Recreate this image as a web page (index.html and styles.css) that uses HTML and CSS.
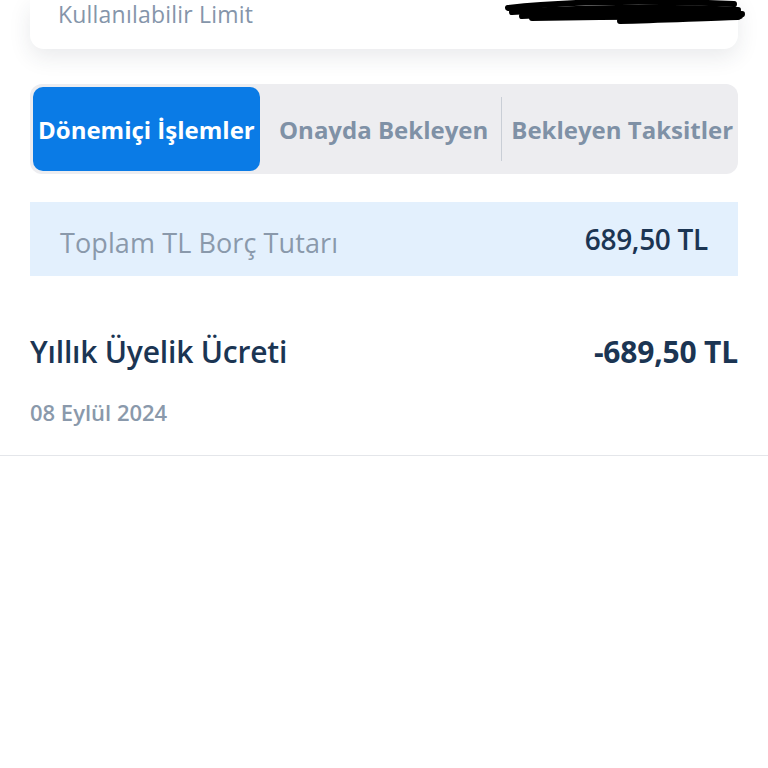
FILE: index.html
```html
<!DOCTYPE html>
<html lang="tr">
<head>
  <meta charset="UTF-8" />
  <meta name="viewport" content="width=device-width, initial-scale=1.0"/>
  <title>Dönemiçi İşlemler</title>
  <link rel="stylesheet" href="styles.css">
</head>
<body>
  <div class="limit-card">
    <span class="limit-label">Kullanılabilir Limit</span>
    <svg class="redact" width="250" height="30" viewBox="0 0 250 30">
      <path d="M6 10 C60 4 140 2 232 6" />
      <path d="M10 14 C80 10 160 8 236 12" />
      <path d="M20 18 C90 14 170 13 240 16" />
      <path d="M30 20 C100 19 180 18 238 18" />
      <path d="M118 23 C160 22 200 20 236 19" />
    </svg>
  </div>

  <div class="tabs">
    <div class="tab active">Dönemiçi İşlemler</div>
    <div class="tab">Onayda Bekleyen</div>
    <div class="tab-sep"></div>
    <div class="tab">Bekleyen Taksitler</div>
  </div>

  <div class="total">
    <span class="total-label">Toplam TL Borç Tutarı</span>
    <span class="total-value">689,50 TL</span>
  </div>

  <div class="item">
    <div class="item-row">
      <span class="item-title">Yıllık Üyelik Ücreti</span>
      <span class="item-amount">-689,50 TL</span>
    </div>
    <div class="item-date">08 Eylül 2024</div>
  </div>
</body>
</html>
```

FILE: styles.css
```css
* {
  margin: 0;
  padding: 0;
  box-sizing: border-box;
  font-family: 'Open Sans', sans-serif;
}

body {
  background: #ffffff;
  width: 768px;
  height: 768px;
  overflow: hidden;
}

.limit-card {
  margin: 0 30px;
  height: 49px;
  background: #fff;
  border-radius: 0 0 14px 14px;
  box-shadow: 0 8px 22px rgba(40, 50, 70, 0.10);
  display: flex;
  justify-content: space-between;
  align-items: flex-start;
  padding: 0 0 0 28px;
}

.limit-label {
  display: block;
  margin-top: 2px;
  font-size: 23px;
  line-height: 24px;
  color: #8595aa;
  letter-spacing: 0.2px;
}

.redact {
  margin-right: -14px;
  margin-top: -2px;
}

.redact path {
  fill: none;
  stroke: #000;
  stroke-width: 6;
  stroke-linecap: round;
}

.tabs {
  margin: 35px 30px 0;
  height: 90px;
  background: #ededf0;
  border-radius: 12px;
  padding: 3px;
  display: flex;
  align-items: center;
}

.tab {
  height: 100%;
  display: flex;
  align-items: center;
  font-size: 24px;
  font-weight: 700;
  color: #7f91a6;
  white-space: nowrap;
}

.tab.active {
  background: #0a7be6;
  color: #fff;
  border-radius: 10px;
  padding: 0 5px;
  width: 227px;
  margin-right: 19px;
}

.tab-sep {
  width: 1px;
  height: 64px;
  background: #c9ced6;
  margin: 0 9px 0 13px;
}

.total {
  margin: 28px 30px 0;
  height: 74px;
  background: #e3f0fd;
  display: flex;
  justify-content: space-between;
  align-items: center;
  padding: 0 30px;
}

.total-label {
  font-size: 27px;
  color: #8a99ab;
  letter-spacing: 0.1px;
  margin-top: 6px;
}

.total-value {
  font-size: 28px;
  font-weight: 600;
  color: #1b3553;
  letter-spacing: -0.3px;
}

.item {
  padding: 55px 30px 0;
  height: 180px;
  border-bottom: 1px solid #e4e6ea;
}

.item-row {
  display: flex;
  justify-content: space-between;
  align-items: center;
}

.item-title {
  font-size: 30px;
  font-weight: 600;
  color: #1b3553;
  letter-spacing: -0.2px;
}

.item-amount {
  font-size: 30px;
  font-weight: 700;
  color: #1b3553;
  letter-spacing: -0.2px;
}

.item-date {
  margin-top: 25px;
  font-size: 22px;
  font-weight: 600;
  color: #8a99ab;
}
```
